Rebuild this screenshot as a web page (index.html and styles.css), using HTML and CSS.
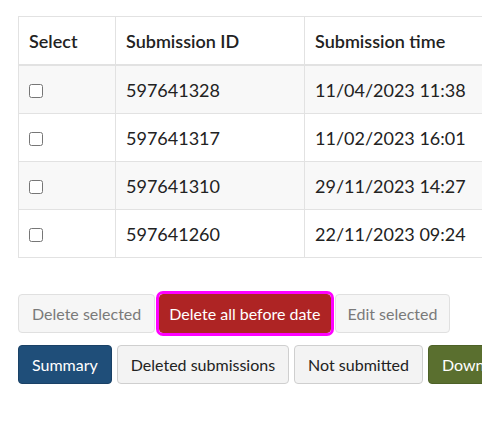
FILE: index.html
```html
<!DOCTYPE html>
<html>
<head>
<meta charset="utf-8">
<link rel="stylesheet" href="styles.css">
</head>
<body>
<div class="page">
  <table class="subs">
    <thead>
      <tr><th class="c1">Select</th><th class="c2">Submission ID</th><th class="c3">Submission time</th></tr>
    </thead>
    <tbody>
      <tr><td><input type="checkbox"></td><td>597641328</td><td>11/04/2023 11:38</td></tr>
      <tr><td><input type="checkbox"></td><td>597641317</td><td>11/02/2023 16:01</td></tr>
      <tr><td><input type="checkbox"></td><td>597641310</td><td>29/11/2023 14:27</td></tr>
      <tr><td><input type="checkbox"></td><td>597641260</td><td>22/11/2023 09:24</td></tr>
    </tbody>
  </table>
  <div class="actions">
    <button class="btn btn-disabled">Delete selected</button>
    <button class="btn btn-danger focused">Delete all before date</button>
    <button class="btn btn-disabled btn-edit">Edit selected</button>
  </div>
  <div class="actions nav">
    <button class="btn btn-primary">Summary</button>
    <button class="btn btn-default">Deleted submissions</button>
    <button class="btn btn-default">Not submitted</button>
    <button class="btn btn-success">Download</button>
  </div>
</div>
</body>
</html>
```

FILE: styles.css
```css
html, body {
  margin: 0;
  padding: 0;
  background: #fff;
  overflow: hidden;
}
body {
  font-family: Lato, "Open Sans", sans-serif;
  font-size: 18px;
  color: #222;
}
.page {
  padding: 16px 0 0 18px;
  width: 600px;
}
.subs {
  border-collapse: collapse;
  table-layout: fixed;
  width: 480px;
  border: 1px solid #e2e2e2;
}
.subs th, .subs td {
  border: 1px solid #e2e2e2;
  padding: 0 10px;
  height: 47px;
  text-align: left;
  vertical-align: middle;
}
.subs th {
  font-weight: 600;
  border-bottom-width: 2px;
}
.c1 { width: 76px; }
.c2 { width: 168px; }
.subs tbody tr:nth-child(odd) td { background: #f8f8f8; }
.subs input[type="checkbox"] {
  margin: 0 0 2px 0;
  width: 14px;
  height: 14px;
  vertical-align: middle;
}
.actions {
  display: flex;
  gap: 4px;
  margin-top: 36px;
}
.actions.nav {
  margin-top: 12px;
  gap: 5px;
}
.btn {
  font-family: Lato, "Open Sans", sans-serif;
  font-size: 16px;
  line-height: 21px;
  padding: 8px 13px;
  border: 1px solid #ccc;
  border-radius: 4px;
  white-space: nowrap;
  flex: none;
}
.btn-disabled {
  background: #f6f6f6;
  border-color: #e0e0e0;
  color: #7a7a7a;
}
.btn-edit {
  padding: 8px 12px;
}
.btn-danger {
  background: #ae2424;
  border-color: #ae2424;
  color: #fff;
  padding: 8px 9px;
}
.focused {
  outline: 3px solid #ff00ff;
  outline-offset: 0;
}
.btn-primary {
  background: #1f4e79;
  border-color: #1a4166;
  color: #fff;
}
.btn-default {
  background: #f3f3f3;
  border-color: #cfcfcf;
  color: #222;
}
.btn-success {
  background: #5a6f2f;
  border-color: #4d6127;
  color: #fff;
}
```
